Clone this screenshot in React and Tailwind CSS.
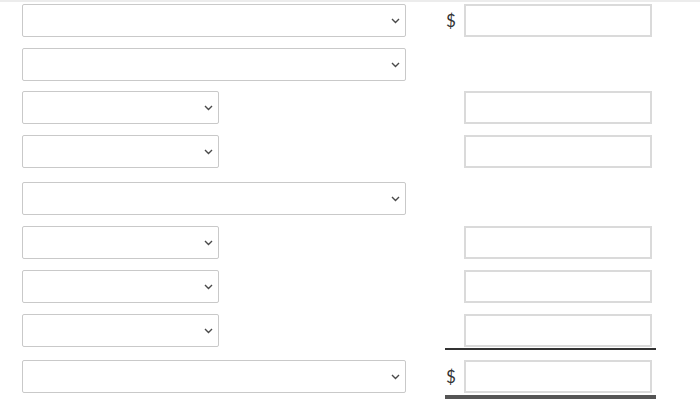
import React from "react";

const rows = [
  { kind: "wide", money: "dollar", mt: "mt-[2px]" },
  { kind: "wide", money: null, mt: "mt-[11px]" },
  { kind: "small", money: "box", mt: "mt-[10px]" },
  { kind: "small", money: "box", mt: "mt-[11px]" },
  { kind: "wide", money: null, mt: "mt-[14px]" },
  { kind: "small", money: "box", mt: "mt-[11px]" },
  { kind: "small", money: "box", mt: "mt-[11px]" },
  { kind: "small", money: "box", mt: "mt-[11px]", rule: "thin" },
  { kind: "wide", money: "dollar", mt: "mt-[10px]", rule: "thick" },
];

function Chevron() {
  return (
    <svg width="9" height="6" viewBox="0 0 9 6" fill="none">
      <path d="M1 1l3.5 3.5L8 1" stroke="#4a4a4a" strokeWidth="1.4" />
    </svg>
  );
}

function Dropdown({ wide }) {
  return (
    <div
      className={`${wide ? "w-[384px]" : "w-[197px]"} h-[33px] flex items-center justify-end pr-[5px] bg-white border border-[#c9c9c9] rounded-[2px]`}>
      <Chevron />
    </div>
  );
}

function Field() {
  return <div className="w-[188px] h-[33px] bg-white border-2 border-[#dadada]" />;
}

function Row({ kind, money, mt, rule }) {
  return (
    <div className={`flex ${mt}`}>
      <div className="w-[445px] pl-[22px]">
        <Dropdown wide={kind === "wide"} />
      </div>
      <div className="w-[211px]">
        <div className="flex items-center h-[33px]">
          <div className="w-[19px] pl-[1px] text-[17px] text-[#333] leading-none">
            {money === "dollar" ? "$" : ""}
          </div>
          {money && <Field />}
        </div>
        {rule === "thin" && <div className="mt-[1px] h-[2px] bg-[#333]" />}
        {rule === "thick" && <div className="mt-[2px] h-[4px] bg-[#555]" />}
      </div>
    </div>
  );
}

export default function App() {
  return (
    <div
      className="w-[700px] h-[415px] bg-white border-t-[2px] border-[#ececec] overflow-hidden"
      style={{ fontFamily: "Lato, 'Liberation Sans', sans-serif" }}>
      {rows.map((r, i) => (
        <Row key={i} {...r} />
      ))}
    </div>
  );
}
